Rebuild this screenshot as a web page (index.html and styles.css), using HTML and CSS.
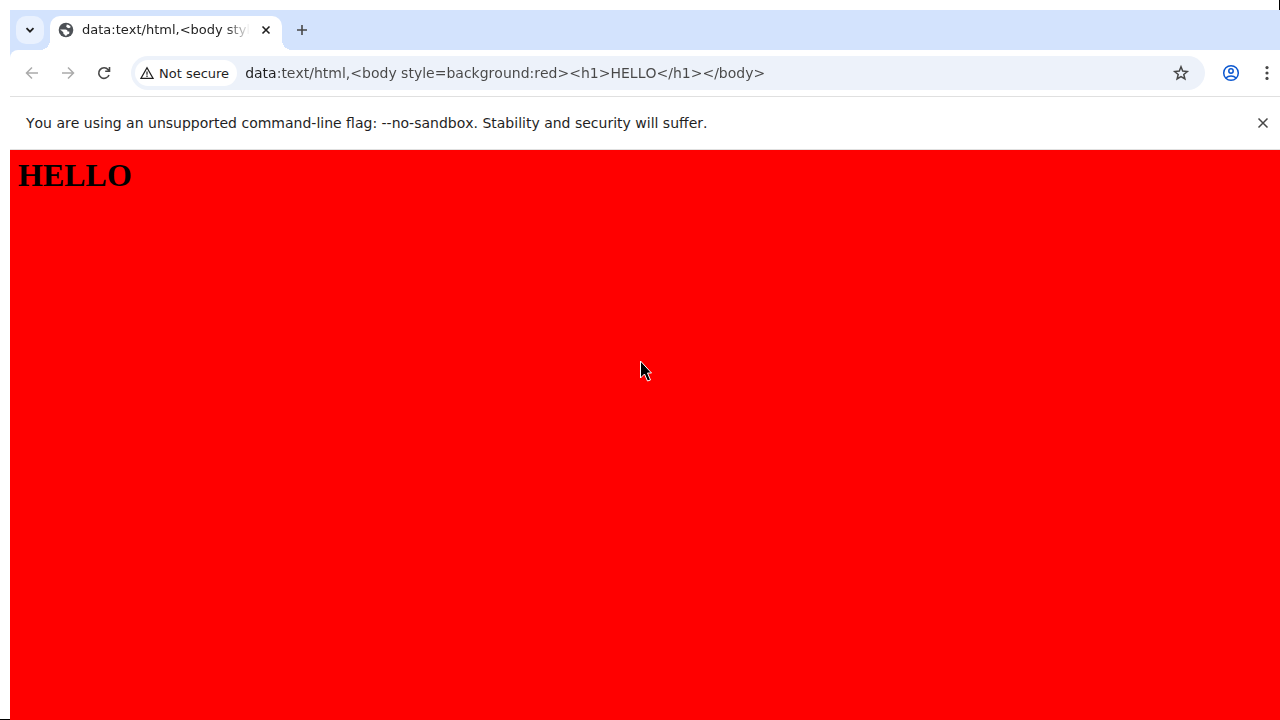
FILE: index.html
```html
<!DOCTYPE html>
<html lang="en">
<head>
    <meta charset="UTF-8">
    <meta name="viewport" content="width=device-width, initial-scale=1.0">
    <title>Browser window</title>
    <link rel="stylesheet" href="styles.css">
</head>
<body>
    <div class="desktop"></div>
    <div class="window">
        <header class="tab-strip">
            <button class="tab-search" aria-label="Search tabs">
                <svg width="16" height="16" viewBox="0 0 16 16"><path d="M4.500 6.200 8 9.700l3.500-3.500" fill="none" stroke="currentColor" stroke-width="1.800"/></svg>
            </button>
            <div class="tab">
                <svg class="favicon" width="16" height="16" viewBox="0 0 16 16">
                    <circle cx="8" cy="8" r="7.300" fill="#4d5156"/>
                    <path d="M8.800 2.400c1.600.2 3.100 1.100 4 2.600-.7.900-1.500 1.300-2.600 1.100C9 5.900 8.900 5.100 8.200 4.800zM2.200 7.600h5.300c1.200 0 2 .7 2 1.800h1.800v1.500c0 1-.8 1.400-2.300 1.500L8.400 13.700C5 13.800 2.200 11 2.200 7.600z" fill="#fff"/>
                    <path d="M5.300 10.200 2.200 7.600l-.4 3 3 3.200 2 .6v-2c-.9 0-1.500-.7-1.500-1.500z" fill="#4d5156"/>
                </svg>
                <span class="tab-title">data:text/html,&lt;body styl</span>
                <button class="tab-close" aria-label="Close tab">
                    <svg width="16" height="16" viewBox="0 0 16 16"><path d="m4.500 4.500 7 7m0-7-7 7" stroke="currentColor" stroke-width="1.600"/></svg>
                </button>
            </div>
            <button class="new-tab" aria-label="New tab">
                <svg width="16" height="16" viewBox="0 0 16 16"><path d="M8 3v10M3 8h10" stroke="currentColor" stroke-width="1.600"/></svg>
            </button>
        </header>

        <nav class="toolbar">
            <button class="tool disabled" aria-label="Back" disabled>
                <svg width="20" height="20" viewBox="0 0 20 20"><path d="M16 10H5M10 4.500 4.500 10l5.500 5.500" fill="none" stroke="currentColor" stroke-width="1.500"/></svg>
            </button>
            <button class="tool disabled" aria-label="Forward" disabled>
                <svg width="20" height="20" viewBox="0 0 20 20"><path d="M4 10h11M10 4.500l5.500 5.500-5.500 5.500" fill="none" stroke="currentColor" stroke-width="1.500"/></svg>
            </button>
            <button class="tool" aria-label="Reload">
                <svg width="20" height="20" viewBox="0 0 20 20"><path d="M15 12a5.300 5.300 0 1 1-.8-5.200L15.500 8M15.500 4v4.300h-4.300" fill="none" stroke="currentColor" stroke-width="1.600"/></svg>
            </button>
            <div class="omnibox">
                <button class="security">
                    <svg width="16" height="16" viewBox="0 0 16 16"><path d="M8 2.700 14 13.300H2z" fill="none" stroke="currentColor" stroke-width="1.300"/><path d="M8 6.500v3.200M8 10.600V12" stroke="currentColor" stroke-width="1.200"/></svg>
                    Not secure
                </button>
                <input class="url" type="text" aria-label="Address" spellcheck="false" value="data:text/html,&lt;body style=background:red&gt;&lt;h1&gt;HELLO&lt;/h1&gt;&lt;/body&gt;">
                <button class="bookmark" aria-label="Bookmark this tab">
                    <svg width="18" height="18" viewBox="0 0 18 18"><path d="m9 2.800 1.700 4.300 4.600.4-3.500 3 1.100 4.500L9 12.600 5.100 15l1.100-4.500-3.500-3 4.600-.4z" fill="none" stroke="currentColor" stroke-width="1.500"/></svg>
                </button>
            </div>
            <button class="tool profile" aria-label="Profile">
                <svg width="20" height="20" viewBox="0 0 20 20" fill="none" stroke="currentColor" stroke-width="1.500"><circle cx="10" cy="10" r="7.300"/><circle cx="10" cy="8" r="2.200"/><path d="M4.800 15c2.900-2.700 7.500-2.700 10.400 0"/></svg>
            </button>
            <button class="menu" aria-label="Menu">
                <svg width="20" height="20" viewBox="0 0 20 20" fill="currentColor"><circle cx="10" cy="4.600" r="1.600"/><circle cx="10" cy="10" r="1.600"/><circle cx="10" cy="15.400" r="1.600"/></svg>
            </button>
        </nav>

        <div class="infobar">
            <span>You are using an unsupported command-line flag: --no-sandbox. Stability and security will suffer.</span>
            <button class="infobar-close" aria-label="Close">
                <svg width="16" height="16" viewBox="0 0 16 16"><path d="m3.500 3.500 9 9m0-9-9 9" stroke="currentColor" stroke-width="1.500"/></svg>
            </button>
        </div>

        <main class="page">
            <h1>HELLO</h1>
        </main>
    </div>

    <svg class="cursor" width="14" height="24" viewBox="0 0 14 24">
        <path d="M.5 1v17l4-4 3 7 3-1-3-7h4z" fill="#000" stroke="#fff" stroke-width="1"/>
    </svg>
</body>
</html>
```
FILE: styles.css
```css
* {
    box-sizing: border-box;
}

body {
    margin: 0;
    height: 100vh;
    overflow: hidden;
    background-color: #000;
    font-family: "DejaVu Sans", sans-serif;
    font-kerning: none;
    color: #1f1f1f;
}

button {
    display: flex;
    align-items: center;
    justify-content: center;
    flex-shrink: 0;
    padding: 0;
    border: none;
    background: none;
    color: inherit;
    font-family: inherit;
}

svg {
    display: block;
    flex-shrink: 0;
}

/* the root window stops one pixel short on the right and bottom */
.desktop {
    position: absolute;
    top: 0;
    left: 0;
    right: 1px;
    bottom: 1px;
    background-color: #fff;
}

.window {
    position: relative;
    height: 100%;
    display: flex;
    flex-direction: column;
    border-top: 10px solid transparent;
    border-left: 10px solid transparent;
    background-color: #d3e3fd;
    background-clip: padding-box;
}

.tab-strip {
    display: flex;
    align-items: center;
    height: 40px;
    padding-left: 6px;
    background-color: #d3e3fd;
}

.tab-search {
    width: 28px;
    height: 28px;
    border-radius: 10px;
    background-color: #e9f1fe;
}

.tab {
    position: relative;
    display: flex;
    align-items: center;
    align-self: flex-end;
    width: 232px;
    height: 34px;
    margin-left: 6px;
    padding: 0 8px 6px;
    border-radius: 10px 10px 0 0;
    background-color: #fff;
}

.tab::before,
.tab::after {
    content: '';
    position: absolute;
    bottom: 0;
    width: 10px;
    height: 10px;
}

.tab::before {
    left: -10px;
    background: radial-gradient(circle at top left, transparent 10px, #fff 10px);
}

.tab::after {
    right: -10px;
    background: radial-gradient(circle at top right, transparent 10px, #fff 10px);
}

.tab-title {
    flex: 1;
    margin: 0 8px;
    white-space: nowrap;
    font-size: 13px;
    line-height: 20px;
    mask-image: linear-gradient(to right, #000 calc(100% - 24px), transparent);
}

.new-tab {
    width: 28px;
    height: 28px;
    margin-left: 6px;
    color: #474747;
}

.toolbar {
    display: flex;
    align-items: center;
    height: 47px;
    padding-left: 4px;
    border-bottom: 1px solid #e0e0e0;
    border-top-left-radius: 8px;
    background-color: #fff;
}

.tool {
    width: 36px;
    height: 34px;
    color: #474747;
}

.disabled {
    color: #ababab;
}

.omnibox {
    flex: 1;
    display: flex;
    align-items: center;
    height: 34px;
    margin: 0 8px 0 9px;
    padding: 0 15px 0 4px;
    border-radius: 17px;
    background-color: #edf2fa;
}

.security {
    gap: 4px;
    height: 26px;
    padding: 0 8px 0 4px;
    border-radius: 13px;
    background-color: #fff;
    font-size: 13px;
}

.url {
    flex: 1;
    min-width: 0;
    height: 26px;
    margin-left: 8px;
    padding: 0;
    border: none;
    outline: none;
    font-family: inherit;
    font-size: 14px;
    font-kerning: none;
    /* the scheme is drawn darker than the rest of the address */
    color: transparent;
    background: linear-gradient(to right, #1f1f1f 33px, #474747 33px);
    background-clip: text;
}

.bookmark {
    color: #474747;
}

.profile {
    color: #0b57d0;
}

.menu {
    width: 36px;
    height: 34px;
    margin-right: -5px;
    color: #474747;
}

.infobar {
    display: flex;
    align-items: center;
    justify-content: space-between;
    height: 53px;
    padding: 0 9px 0 16px;
    border-bottom: 1px solid #e0e0e0;
    background-color: #fff;
    font-size: 14px;
}

.infobar-close {
    color: #474747;
}

.page {
    flex: 1;
    padding: 8px;
    background-color: #f00;
}

.page h1 {
    margin: 0;
    color: #000;
    font-family: "Liberation Serif", serif;
    font-size: 32px;
    line-height: 34px;
}

.cursor {
    position: absolute;
    top: 50%;
    left: 50%;
}
```
